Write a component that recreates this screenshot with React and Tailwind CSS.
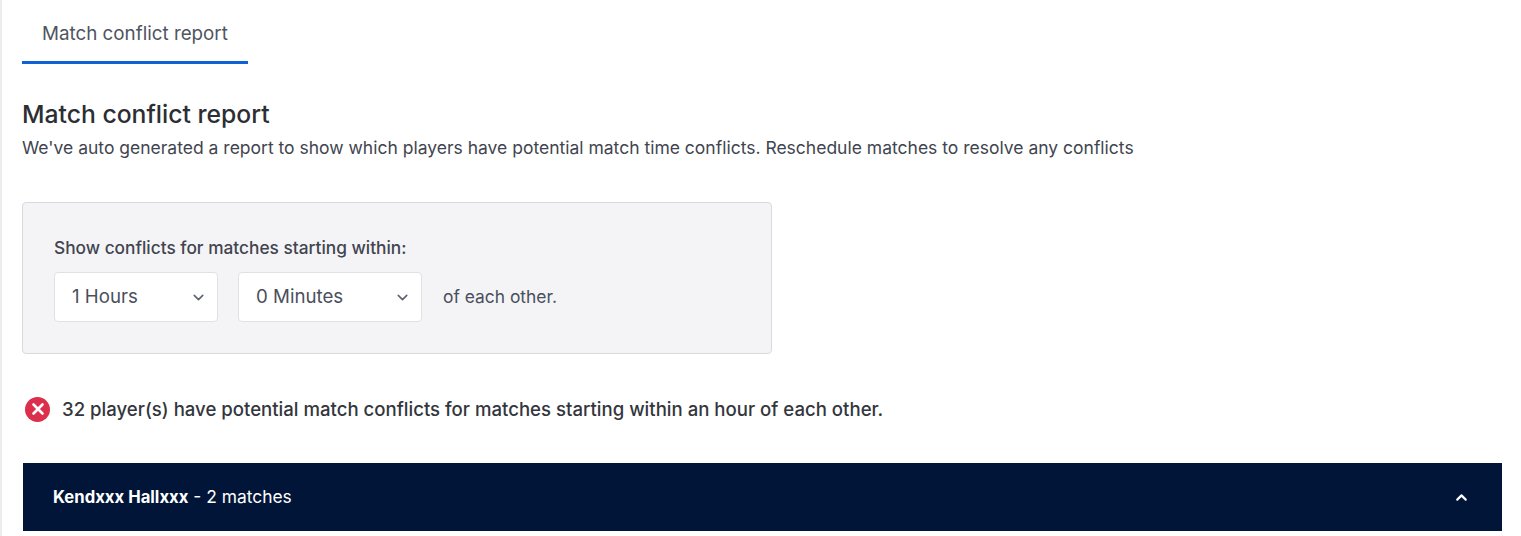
import { ChevronDown, ChevronUp, X } from 'lucide-react';

function Select({ label, className = '' }) {
  return (
    <div className={`flex h-[50px] items-center justify-between rounded border border-[#dfe1e6] bg-white pl-[17px] pr-[10px] text-[18.7px] text-[#4a4f5c] ${className}`}>
      <span className="pb-[1px] leading-[26px]">{label}</span>
      <ChevronDown className="h-[17px] w-[17px] text-[#5f6470]" strokeWidth={2.25} />
    </div>
  );
}

export default function App() {
  return (
    <div className="h-[536px] overflow-hidden border-l-2 border-[#ececec] bg-white pl-[20px] pr-[18px] font-['Inter',sans-serif] text-[#33363d]">
      <div className="flex">
        <div className="flex h-[64px] w-[226px] items-center border-b-[3px] border-[#0f62d6] pl-[20px] pt-[7px] text-[18.8px] text-[#4f5461]">
          Match conflict report
        </div>
      </div>

      <h2 className="mt-[34px] text-[24.7px] leading-[32px] font-medium text-[#2b2e33]">Match conflict report</h2>
      <p className="mt-[6px] text-[17.5px] leading-[24px] text-[#41454f]">
        We've auto generated a report to show which players have potential match time conflicts. Reschedule matches to resolve any conflicts
      </p>

      <div className="mt-[42px] h-[152px] w-[750px] rounded border border-[#d9dade] bg-[#f4f4f7] pl-[31px] pt-[33px]">
        <div className="text-[17.3px] leading-[24px] font-medium text-[#41454f]">Show conflicts for matches starting within:</div>
        <div className="mt-[12px] flex items-center">
          <Select label="1 Hours" className="w-[164px]" />
          <Select label="0 Minutes" className="ml-[20px] w-[184px]" />
          <span className="ml-[21px] mt-[1px] text-[17.4px] text-[#4a4f5c]">of each other.</span>
        </div>
      </div>

      <div className="mt-[42px] flex h-[26px] items-center">
        <span className="ml-[3px] flex h-[25px] w-[25px] items-center justify-center rounded-full bg-[#dc2f4b]">
          <X className="h-[18px] w-[18px] text-white" strokeWidth={3.5} />
        </span>
        <span className="ml-[12px] mt-[1px] text-[18.6px] font-medium text-[#33363d]">
          32 player(s) have potential match conflicts for matches starting within an hour of each other.
        </span>
      </div>

      <div className="mx-[1px] mt-[41px] flex h-[68px] items-center justify-between bg-[#001537] pl-[30px] pr-[32px] text-[17.4px] text-white">
        <div>
          <span className="text-[16.7px] font-bold">Kendxxx Hallxxx</span> - 2 matches
        </div>
        <ChevronUp className="h-[17px] w-[17px] text-white" strokeWidth={3} />
      </div>
    </div>
  );
}
